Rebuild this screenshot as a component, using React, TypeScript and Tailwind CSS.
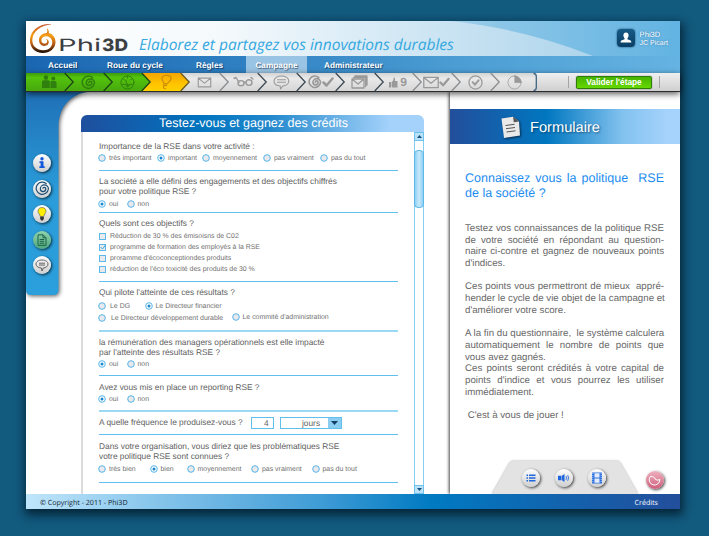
import type { ReactNode } from "react";

const SPIRAL = "M18.500 4.500A9.800 9.800 0 1 0 21.500 12.500a6.500 6.200 0 0 0-13 0a4.400 4.400 0 0 0 8.800 0a2.400 2.400 0 0 0-4.800 0";
const ENVELOPE = "M2 5h20v14H2zM2 5l10 8 10-8";
const CHECK = "M1.5 5.5l3 3 6-7";

type Tone = "green" | "yellow" | "grey";

function StepShape({ tone, last, dark }: { tone: Tone; last: boolean; dark: boolean }) {
  const line = tone === "grey" ? (dark ? "#3d4a54" : "#8a8d90") : tone === "yellow" ? "#6b5a20" : "#1a4517";
  return (
    <svg className="absolute left-0 top-0 h-[18px] w-[48px] overflow-visible" viewBox="0 0 48 18">
      {last ? (
        <path d="M0 0h43.5q3 0 3 3v12q0 3-3 3H0z" fill="url(#grey)" />
      ) : (
        <path d="M0 0h38.700l8.500 9-8.500 9H0z" fill={`url(#${tone})`} />
      )}
      <path
        d={last ? "M43.5 .5q2.800 0 2.800 3v11q0 3-2.800 3" : "M38.7 0l8.500 9-8.500 9"}
        fill="none"
        stroke={last ? "#3f6481" : line}
        strokeWidth="1.3"
      />
    </svg>
  );
}

function Glyph({ children, w = 15, h = 15, box = "0 0 24 24", sw = 1.8 }: { children: ReactNode; w?: number; h?: number; box?: string; sw?: number }) {
  return (
    <svg width={w} height={h} viewBox={box} fill="none" stroke="currentColor" strokeWidth={sw} strokeLinejoin="round" strokeLinecap="round">
      {children}
    </svg>
  );
}

const steps: { tone: Tone; dark?: boolean; icon: ReactNode }[] = [
  {
    tone: "green",
    icon: (
      <Glyph w={15} h={14} box="0 0 15 14" sw={0}>
        <g fill="currentColor">
          <circle cx="4" cy="2.6" r="2.3" />
          <path d="M0 13V6.8q0-1.6 1.6-1.6h4.6q1.6 0 1.6 1.6V13z" />
          <circle cx="11.3" cy="3.4" r="2" />
          <path d="M8.5 13V6h4.3q1.7 0 1.7 1.6V13z" />
        </g>
      </Glyph>
    ),
  },
  { tone: "green", icon: <Glyph w={15} h={15} sw={2.4}><path d={SPIRAL} /></Glyph> },
  {
    tone: "green",
    icon: <Glyph w={15} h={15} sw={1.5}><circle cx="12" cy="12" r="10.5" /><path d="M4 15h5M15 15h5M12 17l-3-9M12 2v3M5 6l2 2M19 6l-2 2" /><circle cx="12" cy="17" r="2" /></Glyph>,
  },
  {
    tone: "yellow",
    icon: <Glyph w={16} h={16} sw={1.7}><path d="M9 14C6 9 5 7 6.500 4.500 9 1 18 1 19.500 5c1.300 4-3 6-6 10zM8.500 16.500l4.500 1M8.500 16v5l2.500 1" /></Glyph>,
  },
  { tone: "grey", icon: <Glyph w={17} h={15} sw={1.8}><path d={ENVELOPE} /></Glyph> },
  {
    tone: "grey",
    dark: true,
    icon: <Glyph w={21} h={12} box="0 0 21 12" sw={1.4}><path d="M1 2.5l2-1 3 5M20 3l-2-1.6" /><ellipse cx="8" cy="7.2" rx="3" ry="2.6" /><ellipse cx="16" cy="6.6" rx="3" ry="2.8" /><path d="M11 6.4q1-1 2 0" /></Glyph>,
  },
  {
    tone: "grey",
    dark: true,
    icon: <Glyph w={17} h={15} box="0 0 17 15" sw={1.1}><path d="M8.500 1c4 0 7.300 2 7.300 5s-3 4.800-6 5L7.500 14l-.3-3C3.500 10.800 1 9 1 6s3.500-5 7.500-5zM4.500 4.700h8M4.500 7.200h8" /></Glyph>,
  },
  {
    tone: "grey",
    dark: true,
    icon: <><Glyph w={14} h={14} sw={2.8}><path d={SPIRAL} /></Glyph><Glyph w={12} h={10} box="0 0 12 10" sw={2.5}><path d={CHECK} /></Glyph></>,
  },
  {
    tone: "grey",
    dark: true,
    icon: <Glyph w={17} h={14} box="0 0 17 14" sw={1.3}><path d="M1 4h12v9H1zM1 4l6 5 6-5" /><path d="M2.500 2.500h12.200v9M4 1h12v9" /></Glyph>,
  },
  {
    tone: "grey",
    icon: (
      <>
        <Glyph w={9} h={11} box="0 0 9 11" sw={0}><path fill="currentColor" d="M0 5h2v5.500H0zM2.600 5L4.300 3.500 4.600 .5q1.600-.3 1.500 1.800L5.900 4H8.500v6.500H3.500L2.600 10z" /></Glyph>
        <span className="ml-[2px] font-['Liberation_Sans',sans-serif] text-[12px] font-bold leading-none">9</span>
      </>
    ),
  },
  {
    tone: "grey",
    icon: <><Glyph w={16} h={13} box="1 3 22 18" sw={1.8}><path d={ENVELOPE} /></Glyph><Glyph w={11} h={10} box="0 0 12 10" sw={2.4}><path d={CHECK} /></Glyph></>,
  },
  { tone: "grey", icon: <Glyph w={15} h={15} sw={2}><circle cx="12" cy="12" r="10.500" /><path strokeWidth="3" d="M7.500 11.500l3.500 4 6-7" /></Glyph> },
  {
    tone: "grey",
    icon: <Glyph w={15} h={15} sw={1.2}><circle cx="12" cy="12" r="10.500" /><path d="M12.500 1.500v10.500h10.200A10.400 10.400 0 0 0 12.500 1.500z" fill="currentColor" /></Glyph>,
  },
];

function Logo() {
  return (
    <svg className="h-[34px] w-[104px] overflow-visible" viewBox="0 0 104 34">
      <defs>
        <linearGradient id="swirl" x1="0" y1="0" x2="0" y2="1">
          <stop offset="0" stopColor="#c4502c" />
          <stop offset=".4" stopColor="#f7a014" />
          <stop offset=".7" stopColor="#b4560f" />
          <stop offset="1" stopColor="#140a06" />
        </linearGradient>
      </defs>
      <path
        d="M25.500 3.200C15 2.300 4 8.500 4 19.500c0 7.500 5.200 12.500 12.800 12.500 7 0 12.700-4.500 12.700-11 0-5.500-4-8.900-8.500-8.900-4.700 0-8 3-8 7 0 3.600 2.400 5.900 5.300 5.900 2.800 0 4.700-2 4.500-4.200-.2-1.900-1.700-3-3.300-2.800 1.200.4 1.800 1.300 1.700 2.400-.2 1.500-1.500 2.500-3 2.200-1.800-.3-3-1.800-2.800-3.700.2-2.300 2.400-3.900 5-3.700 3.700.3 6 2.900 5.900 6.500-.2 4.500-3.800 7.500-8.700 7.500C10.500 29.200 6.300 25 6.300 19.300 6.400 10.500 14.500 4.500 25.500 3.200z"
        fill="url(#swirl)"
      />
      <path d="M20.500 13q1.600-2.500 .4-6q2.800 2.700 1.700 6.300z" fill="#e8861b" />
      <g fontFamily="Inter, sans-serif" fontSize="17" fill="#3c4043">
        <text x="32" y="30" fontWeight="400" textLength="43" lengthAdjust="spacingAndGlyphs">Phi</text>
        <text x="76" y="30" fontWeight="800" textLength="26" lengthAdjust="spacingAndGlyphs">3D</text>
      </g>
    </svg>
  );
}

function Header() {
  return (
    <header className="relative flex h-[35px] items-start bg-[linear-gradient(90deg,#fff_0%,#fff_22%,#dcebf5_50%,#8cc6e7_72%,#62b3e2_100%)]">
      <svg className="absolute left-0 top-0 h-[35px] w-[654px]" viewBox="0 0 654 35">
        <defs>
          <linearGradient id="arc" x1="0" x2="1">
            <stop offset="0" stopColor="#fff" />
            <stop offset=".35" stopColor="#f4f9fc" />
            <stop offset="1" stopColor="#aed5ec" />
          </linearGradient>
        </defs>
        <path d="M0 0H424Q500 8 567 35H0z" fill="url(#arc)" />
      </svg>
      <div className="relative flex w-full">
        <Logo />
        <p className="ml-[9px] mt-[13px] whitespace-nowrap font-['Open_Sans',sans-serif] text-[15.5px] italic leading-[20px] text-[#35a8e0]">
          Elaborez et partagez vos innovations durables
        </p>
        <div className="ml-auto mr-[12px] mt-[8px] flex">
          <div className="flex h-[18px] w-[18px] items-center justify-center rounded-[4px] bg-[linear-gradient(#175a86,#0a3f66)] shadow-[0_0_2px_#0a3f66]">
            <svg width="12" height="12" viewBox="0 0 12 12" fill="#fff">
              <path d="M6 .5c1.700 0 2.600 1.200 2.600 2.800 0 1.400-.6 2.300-1.200 2.900v1c1.700.5 4 .9 4 3.300H.6c0-2.400 2.300-2.800 4-3.300v-1C4 5.600 3.400 4.700 3.400 3.300 3.400 1.700 4.300 .5 6 .5z" />
            </svg>
          </div>
          <div className="ml-[5px] mt-px whitespace-nowrap text-[7px] leading-[9px] text-white [text-shadow:0_0_2px_#2b6f9e]">
            <div className="text-[7.6px]">Phi3D</div>
            <div>JC Picart</div>
          </div>
        </div>
      </div>
    </header>
  );
}

function Nav() {
  return (
    <nav className="flex h-[17px] whitespace-nowrap bg-[linear-gradient(90deg,#1b66b1,#2f80c2_33%,#4b9dd3_66%,#65b3e2)] text-[8.25px] font-bold leading-[19px] text-white [text-shadow:1px_1px_1px_rgba(0,20,50,.6)]">
      <span className="w-[59px] pl-[22px]">Accueil</span>
      <span className="w-[88px] pl-[22px]">Roue du cycle</span>
      <span className="w-[73px] pl-[23px]">Règles</span>
      <span className="w-[61px] bg-[#9ac4e3] text-center">Campagne</span>
      <span className="pl-[17px]">Administrateur</span>
    </nav>
  );
}

function StepBar() {
  return (
    <div className="relative z-10 flex h-[19px] border-b border-[#2c2c2c] bg-[linear-gradient(#efefef,#cfcfcf)] shadow-[0_2px_6px_rgba(0,0,0,.65)]">
      <svg className="absolute h-0 w-0">
        <defs>
          <linearGradient id="green" x1="0" y1="0" x2="0" y2="1">
            <stop offset="0" stopColor="#3c9a0c" />
            <stop offset=".25" stopColor="#54c30c" />
            <stop offset="1" stopColor="#46a80e" />
          </linearGradient>
          <linearGradient id="yellow" x1="0" y1="0" x2="0" y2="1">
            <stop offset="0" stopColor="#f4a400" />
            <stop offset=".6" stopColor="#ffc400" />
            <stop offset="1" stopColor="#ffd000" />
          </linearGradient>
          <linearGradient id="grey" x1="0" y1="0" x2="0" y2="1">
            <stop offset="0" stopColor="#d4d4d4" />
            <stop offset=".3" stopColor="#e9e9e9" />
            <stop offset="1" stopColor="#d6d6d6" />
          </linearGradient>
        </defs>
      </svg>
      <div className="isolate flex flex-row-reverse">
        {[...steps].reverse().map((s, i) => (
          <div key={i} className="relative h-[18px] w-[38.7px]" style={{ zIndex: i }}>
            <StepShape tone={s.tone} last={i === 0} dark={!!s.dark} />
            <div
              className={`relative flex h-[18px] w-[47.7px] items-center justify-center ${
                s.tone === "green" ? "text-[#2f800e]" : s.tone === "yellow" ? "text-[#c98a08]" : "text-[#999]"
              }`}
            >
              {s.icon}
            </div>
          </div>
        ))}
      </div>
      <div className="ml-auto mr-[20px] flex h-[18px] items-center">
        <span className="h-[12px] w-px bg-[#a5a5a5]" />
        <button className="mx-[7px] h-[13px] w-[76px] whitespace-nowrap rounded-[2px] border border-[#2f7d06] bg-[linear-gradient(#46b400,#66d800)] text-[8.3px] font-bold leading-[11px] text-white shadow-[0_0_1px_#333]">
          Valider l'étape
        </button>
        <span className="h-[12px] w-px bg-[#a5a5a5]" />
      </div>
    </div>
  );
}

function RoundButton({ className = "", children }: { className?: string; children: ReactNode }) {
  return (
    <button className={`flex h-[18px] w-[18px] items-center justify-center rounded-full shadow-[1px_1px_3px_rgba(0,0,0,.75)] ${className || "bg-[linear-gradient(#fdfdfd,#cfcfcf)]"}`}>
      {children}
    </button>
  );
}

function Sidebar() {
  return (
    <aside className="relative w-[55px] shrink-0">
      <svg className="absolute left-0 top-0 h-[206px] w-[62px] overflow-visible drop-shadow-[1px_1px_2px_rgba(0,0,0,.65)]" viewBox="0 0 62 206">
        <defs>
          <linearGradient id="side" x1="0" y1="0" x2="0" y2="1">
            <stop offset="0" stopColor="#1f70b7" />
            <stop offset=".5" stopColor="#2a9cd9" />
            <stop offset="1" stopColor="#2a9fdc" />
          </linearGradient>
        </defs>
        <path d="M0 0H62C44 2 32.500 16 32.500 35V198q0 5-5 5H5q-5 0-5-5z" fill="url(#side)" />
      </svg>
      <div className="relative flex flex-col gap-[7.5px] pl-[7px] pt-[62px]">
        <RoundButton>
          <svg width="14" height="14" viewBox="0 0 14 14" fill="#1257dc">
            <circle cx="7" cy="2.700" r="1.700" /><path d="M4.500 5.200h4v5.100h1.200v1.800H4.400v-1.800h1.200V6.900H4.500z" />
          </svg>
        </RoundButton>
        <RoundButton>
          <svg width="15" height="15" viewBox="0 0 24 24" fill="none" stroke="#1d4e74" strokeWidth="1.900"><path d={SPIRAL} /></svg>
        </RoundButton>
        <RoundButton>
          <svg width="14" height="14" viewBox="0 0 14 14">
            <path d="M7 .5c2.500 0 4 1.700 4 3.800C11 6.500 9 7.200 8.800 9.500H5.200C5 7.200 3 6.500 3 4.300 3 2.200 4.500.5 7 .5z" fill="#ffee00" stroke="#555" strokeWidth=".6" />
            <path d="M5.200 9.700h3.600v2.300L7.800 13.500H6.200L5.200 12z" fill="#333" />
          </svg>
        </RoundButton>
        <RoundButton className="bg-[linear-gradient(#8fd3ae,#4fa67d)]">
          <svg width="12" height="12" viewBox="0 0 12 12" fill="none" stroke="#1c6247" strokeWidth="1">
            <path d="M2 .8h5l3 3v7.500H2zM7 .8v3h3M3.700 5.500h4.500M3.700 7.300h4.500M3.700 9.200h4.500" />
          </svg>
        </RoundButton>
        <RoundButton>
          <svg width="14" height="13" viewBox="0 0 14 13" fill="none" stroke="#555" strokeWidth=".9">
            <path d="M7 1c3.300 0 6 1.600 6 4s-2.200 3.800-4.700 4L7 12l-.6-3C3.200 8.800 1 7.400 1 5s2.700-4 6-4zM4 4.200h6M4 6h6" />
          </svg>
        </RoundButton>
      </div>
    </aside>
  );
}

function Choice({ label, checked = false, square = false, className = "" }: { label: string; checked?: boolean; square?: boolean; className?: string }) {
  return (
    <label className={`flex h-[10px] shrink-0 items-center gap-[3px] whitespace-nowrap text-[6.95px] leading-[10px] text-[#707070] ${className}`}>
      {square ? (
        <svg className="-mt-px mr-px shrink-0" width="7" height="7" viewBox="0 0 7 7">
          <rect x=".5" y=".5" width="6" height="6" fill="#e8eaec" stroke="#5bb8ea" />
          {checked && <path d="M1.500 3l2 2L6.700 .8" fill="none" stroke="#3da5dd" />}
        </svg>
      ) : (
        <svg className="shrink-0" width="8" height="8" viewBox="0 0 8 8">
          <circle cx="4" cy="4" r="3.300" fill={checked ? "#fff" : "#e9e9ec"} stroke="#54b4e8" strokeWidth="1" />
          {checked && <circle cx="4" cy="4" r="1.500" fill="#1c86cc" />}
        </svg>
      )}
      <span className={square ? "" : "pt-[2px]"}>{label}</span>
    </label>
  );
}

function Arrow({ up = false }: { up?: boolean }) {
  return (
    <div className="flex h-[9px] items-center justify-center border border-[#6fc2ee] bg-[#b9e2f8]">
      <svg width="5" height="3" viewBox="0 0 5 3" fill="#15507c"><path d={up ? "M0 3L2.500 0 5 3z" : "M0 0h5L2.500 3z"} /></svg>
    </div>
  );
}

const thin = "border-b border-[#62bfec]";
const thick = "border-b-2 border-[#9bd8f3]";

function OuiNon() {
  return (
    <div className="-ml-px mt-[2px] flex">
      <Choice label="oui" checked className="w-[28.5px]" />
      <Choice label="non" />
    </div>
  );
}

function Questionnaire() {
  return (
    <section className="flex w-[343px] shrink-0 flex-col pt-[23px]">
      <h2 className="h-[17px] rounded-t-[6px] bg-[linear-gradient(90deg,#1f4f9e_0%,#0074bf_35%,#2288cc_55%,#a4d2fb_90%)] pl-[2px] text-center text-[12.5px] leading-[17px] text-white">
        Testez-vous et gagnez des crédits
      </h2>
      <div className="flex flex-1 border-l-2 border-[#dcdcde]">
        <form className="ml-[16px] w-[299px] whitespace-nowrap text-[8.33px] leading-[10px] text-[#626262]">
          <div className={`h-[39px] pt-[9px] ${thin}`}>
            <p>Importance de la RSE dans votre activité :</p>
            <div className="-ml-px mt-[2px] flex">
              <Choice label="très important" className="w-[59px]" />
              <Choice label="important" checked className="w-[45px]" />
              <Choice label="moyennement" className="w-[61px]" />
              <Choice label="pas vraiment" className="w-[57px]" />
              <Choice label="pas du tout" />
            </div>
          </div>
          <div className={`h-[42px] pt-[5px] ${thin}`}>
            <p className="mb-[3px]">La société a elle défini des engagements et des objectifs chiffrés<br />pour votre politique RSE ?</p>
            <OuiNon />
          </div>
          <div className={`h-[69px] pt-[5px] ${thin}`}>
            <p>Quels sont ces objectifs ?</p>
            <div className="mt-[4px] flex flex-col gap-px">
              <Choice square label="Réduction de 30 % des émisoisns de C02" />
              <Choice square checked label="programme de formation des employés à la RSE" />
              <Choice square label="proramme d'écoconceptiondes produits" />
              <Choice square label="réduction de l'éco toxicité des produits de 30 %" />
            </div>
          </div>
          <div className={`h-[50px] pt-[5px] ${thick}`}>
            <p>Qui pilote l'atteinte de ces résultats ?</p>
            <div className="-ml-px mt-[4px] flex">
              <Choice label="Le DG" className="w-[46.5px] gap-[4px]" />
              <Choice label="Le Directeur financier" checked />
            </div>
            <div className="-ml-px mt-[2px] flex">
              <Choice label="Le Directeur développement durable" className="w-[133.5px] gap-[5px]" />
              <Choice label="Le commité d'administration" className="-mt-px" />
            </div>
          </div>
          <div className={`h-[44px] pt-[5px] ${thin}`}>
            <p>la rémunération des managers opérationnels est elle impacté<br />par l'atteinte des résultats RSE ?</p>
            <OuiNon />
          </div>
          <div className={`h-[36px] pt-[6px] ${thick}`}>
            <p>Avez vous mis en place un reporting RSE ?</p>
            <OuiNon />
          </div>
          <div className={`flex h-[23px] pt-[5px] leading-[11px] ${thin}`}>
            <p className="w-[152px]">A quelle fréquence le produisez-vous ?</p>
            <div className="h-[12px] w-[23px] border border-[#62bfec] pl-[12px] leading-[10px]">4</div>
            <div className="ml-[6px] flex h-[12px] w-[62px] border border-[#62bfec] leading-[10px]">
              <span className="flex-1 pl-[21px]">jours</span>
              <span className="flex w-[13px] items-center justify-center bg-[#8ccdf2]">
                <svg width="7" height="4" viewBox="0 0 7 4" fill="#123f66"><path d="M0 0h7L3.500 4z" /></svg>
              </span>
            </div>
          </div>
          <div className={`h-[48px] pt-[6px] ${thin}`}>
            <p>Dans votre organisation, vous diriez que les problèmatiques RSE<br />votre politique RSE sont connues ?</p>
            <div className="-ml-px mt-[3px] flex">
              <Choice label="très bien" className="w-[51.5px]" />
              <Choice label="bien" checked className="w-[37px]" />
              <Choice label="moyennement" className="w-[64.5px]" />
              <Choice label="pas vraiment" className="w-[60.5px]" />
              <Choice label="pas du tout" />
            </div>
          </div>
        </form>
        <div className="ml-auto flex w-[10px] flex-col border-x border-[#86cdf2] bg-white">
          <div className="-mx-px"><Arrow up /></div>
          <div className="-mx-px mt-[9px] h-[58px] rounded-[4px] border border-[#5db8ea] bg-[linear-gradient(90deg,#8fd0f3,#c8e9fa_50%,#8fd0f3)]" />
          <div className="-mx-px mt-auto"><Arrow /></div>
        </div>
      </div>
    </section>
  );
}

const infoLines: [string, boolean][] = [
  ["Testez vos connaissances de la politique RSE", true],
  ["de votre société en répondant au question-", true],
  ["naire ci-contre et gagnez de nouveaux points", true],
  ["d'indices.", false],
  ["", false],
  ["Ces points vous permettront de mieux\u00a0 appré-", true],
  ["hender le cycle de vie objet de la campagne et", true],
  ["d'améliorer votre score.", false],
  ["", false],
  ["A la fin du questionnaire,\u00a0 le système calculera", true],
  ["automatiquement le nombre de points que", true],
  ["vous avez gagnés.", false],
  ["Ces points seront crédités à votre capital de", true],
  ["points d'indice et vous pourrez les utiliser", true],
  ["immédiatement.", false],
  ["", false],
  ["\u00a0C'est à vous de jouer !", false],
];

function InfoPanel() {
  return (
    <section className="ml-auto flex w-[230px] shrink-0 flex-col bg-white pt-[17px] shadow-[-1px_0_3px_rgba(0,0,0,.75)]">
      <h2 className="flex h-[35px] items-center bg-[linear-gradient(90deg,#234e9b_0%,#0077c0_42%,#82c2ef_75%,#a6d3fc_95%)] text-[14.65px] text-white [text-shadow:1px_1px_2px_rgba(0,30,60,.6)]">
        <svg className="ml-[50px] mt-[2px] drop-shadow-[1px_1px_1px_rgba(0,0,0,.6)]" width="21" height="23" viewBox="0 0 21 23">
          <path d="M1.500 2.500L13 .7l6 4.800L20 19.500 4 22z" fill="#e9e9e9" />
          <path d="M13 .7l.8 5.500 5.200-.7z" fill="#555" />
          <path d="M5.500 9.500l9-1.200M6 12.700l9-1.200M6.500 16l9-1.200" stroke="#555" strokeWidth="1" />
        </svg>
        <span className="ml-[9px] pt-[4px]">Formulaire</span>
      </h2>
      <div className="w-[215px] whitespace-nowrap pl-[15px]">
        <h3 className="mt-[27px] w-[199px] text-[12.5px] leading-[15px] text-[#1a8cf0]">
          <span className="block [text-align-last:justify]">Connaissez vous la politique&nbsp; RSE</span>
          <span className="block">de la société ?</span>
        </h3>
        <div className="mt-[22px] w-[199px] text-[9.7px] leading-[11.7px] text-[#686868]">
          {infoLines.map(([text, full], i) => (
            <div key={i} className={full ? "h-[11.7px] [text-align-last:justify]" : "h-[11.7px]"}>{text}</div>
          ))}
        </div>
      </div>
      <div className="relative mt-auto flex h-[33px]">
        <svg className="absolute left-[42px] top-0 h-[33px] w-[146px] drop-shadow-[0_0_1px_rgba(0,0,0,.35)]" viewBox="0 0 146 33">
          <path d="M0 33L17 3q1.500-3 4-3H125q2.500 0 4 3l17 30z" fill="#e3e3e4" />
        </svg>
        <div className="relative flex gap-[15px] pl-[71.5px] pt-[8px]">
          <RoundButton>
            <svg width="10" height="10" viewBox="0 0 10 10" fill="#1f66dc"><path d="M.5 1.500h1.500v1.500H.500zM3 1.500h6.500v1.500H3zM.5 4.200h1.500v1.500H.500zM3 4.200h6.500v1.500H3zM.5 7h1.500v1.500H.500zM3 7h6.500v1.500H3z" /></svg>
          </RoundButton>
          <RoundButton>
            <svg width="13" height="10" viewBox="0 0 13 10" fill="#1f66dc"><path d="M1 2.800h3v4.400H1zM4.500 3L7.500 1v8L4.500 7z" /><path d="M9 3.200q1 1.800 0 3.600M10.700 2.200q1.700 2.800 0 5.600" fill="none" stroke="#1f66dc" strokeWidth=".9" /></svg>
          </RoundButton>
          <RoundButton>
            <svg width="10" height="12" viewBox="0 0 10 12"><path d="M0 .5h10v11H0z" fill="#2f72e0" /><path d="M2.500 1.200h5v4.200h-5zM2.500 6.600h5v4.200h-5z" fill="#e3ecfa" /><path d="M.8 1v10M9.200 1v10" stroke="#e3ecfa" strokeWidth=".7" strokeDasharray="1 1" /></svg>
          </RoundButton>
        </div>
        <div className="relative ml-[40px] mt-[10px]">
          <RoundButton className="bg-[linear-gradient(#eeb0be,#cf5f7c)]">
            <svg width="13" height="13" viewBox="0 0 13 13" fill="none" stroke="#fff" strokeWidth="1"><path d="M2.300 2.500A5.300 5.300 0 1 0 11.800 5.500Q9 7 7.200 5.200 7 2.500 2.300 2.500z" /></svg>
          </RoundButton>
        </div>
      </div>
    </section>
  );
}

export default function App() {
  return (
    <div className="h-[536px] w-[709px] overflow-hidden bg-[#125a7e] pl-[26px] pt-[21px] font-['Liberation_Sans',Arial,sans-serif] [text-rendering:geometricPrecision]">
      <div className="flex h-[488px] w-[654px] flex-col bg-white shadow-[1px_4px_9px_2px_rgba(0,20,35,.75)]">
        <Header />
        <Nav />
        <StepBar />
        <main className="flex h-[402px] overflow-hidden bg-white">
          <Sidebar />
          <Questionnaire />
          <InfoPanel />
        </main>
        <footer className="flex h-[15px] items-center justify-between whitespace-nowrap bg-[linear-gradient(90deg,#bfe5fb_0%,#3f9cd6_45%,#007ac2_62%,#234e9b_100%)] pl-[14px] pr-[22px] pt-[3px] font-['Open_Sans',sans-serif] text-[7.1px] leading-[12px]">
          <span className="text-[#12202c]">© Copyright - 2011 - Phi3D</span>
          <span className="text-white">Crédits</span>
        </footer>
      </div>
    </div>
  );
}
